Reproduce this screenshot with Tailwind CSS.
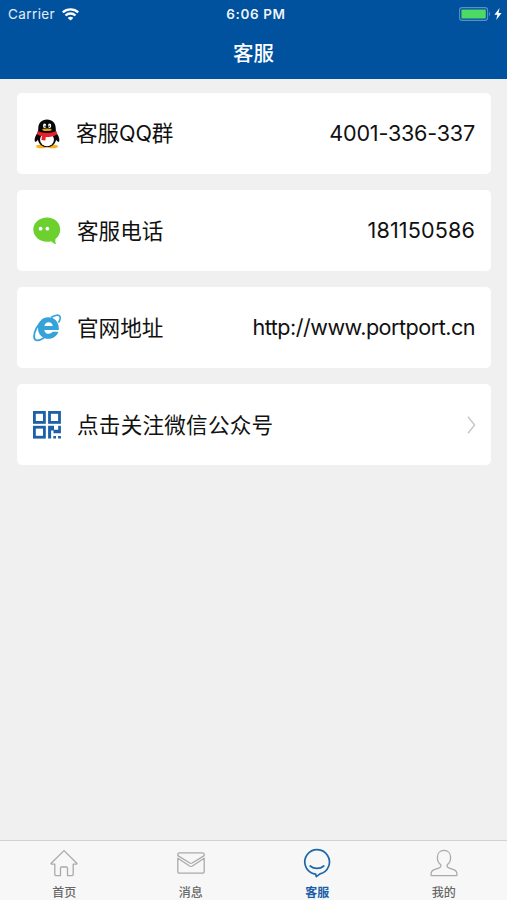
<!DOCTYPE html>
<html lang="zh-CN">
<head>
    <meta charset="UTF-8">
    <meta name="viewport" content="width=device-width, initial-scale=1.0">
    <title>客服</title>
    <script src="https://cdn.jsdelivr.net/npm/@tailwindcss/browser@4"></script>
</head>
<body class="bg-[#f0f0f0] h-screen flex flex-col overflow-hidden font-[Inter,'Noto_Sans_CJK_SC',sans-serif]">
    <!-- Header -->
    <header class="h-[79px] shrink-0 bg-[#00529f] text-white">
        <!-- Status bar -->
        <div class="h-7 grid grid-cols-3 items-center pl-2 pr-[5px] text-[13.5px]">
            <div class="flex items-center gap-[7px] text-white/90">
                <span class="tracking-[0.4px]">Carrier</span>
                <svg class="w-[17px] h-[13px]" viewBox="0 0 17 13" fill="none" stroke="#fff" stroke-width="2.3">
                    <path d="M.8 4.4C5.200.4 11.800.4 16.200 4.400" />
                    <path d="M3.500 7.500c2.800-2.700 7.200-2.700 10 0" />
                    <path d="M8.500 12.600 5.700 9.900c1.500-1.400 4.100-1.400 5.600 0z" fill="#fff" stroke="none" />
                </svg>
            </div>
            <div class="text-center font-semibold text-[13.5px] leading-5 tracking-[0.6px] text-white/95 pl-0.5 pb-px">6:06 PM</div>
            <div class="flex items-center justify-end gap-[3px]">
                <svg class="w-[32px] h-[14px]" viewBox="0 0 32 14">
                    <rect x=".6" y=".6" width="28" height="12.8" rx="2.6" fill="none" stroke="#5b90c4" stroke-width="1.1" />
                    <rect x="2.4" y="2.4" width="24.4" height="9.2" rx="1" fill="#4cd964" />
                    <path d="M30 4.8c1.4.6 1.4 3.8 0 4.4z" fill="#5b90c4" />
                </svg>
                <svg class="w-[8px] h-[12px]" viewBox="0 0 8 12" fill="#fff">
                    <path d="M5.6 0 .4 6.8h3L2.2 12 7.6 5H4.5z" />
                </svg>
            </div>
        </div>
        <h1 class="h-12 text-center text-[20.5px] leading-[51px] font-medium">客服</h1>
    </header>

    <!-- Contact list -->
    <main class="flex-1 pl-[17px] pr-4 pt-3.5 flex flex-col gap-[16.1px] text-[21.6px] text-[#111]">
        <div class="h-[81px] bg-white rounded-[5px] flex items-center pl-4 pr-4">
            <svg class="w-7 h-[30px] mr-[15px]" viewBox="0 0 28 30">
                <ellipse cx="8.5" cy="27.4" rx="5.4" ry="1.8" fill="#f9b21c" />
                <ellipse cx="19.5" cy="27.4" rx="5.4" ry="1.8" fill="#f9b21c" />
                <path d="M14 .6C8.500.6 5.300 4.400 5.300 9L5 13C2.900 16 1.300 19 1.700 22c.3 1.600 1.700.8 3.200-1.300C6 25.400 9.500 28.200 14 28.200s8-2.800 9.100-7.500c1.500 2.100 2.900 2.900 3.200 1.300.4-3-1.200-6-3.300-9l-.3-4C22.700 4.400 19.500.6 14 .6z" fill="#080808" />
                <ellipse cx="14" cy="20.6" rx="7" ry="6.6" fill="#fff" />
                <ellipse cx="11.6" cy="6.8" rx="1.6" ry="2.2" fill="#fff" />
                <ellipse cx="16.6" cy="6.8" rx="1.6" ry="2.2" fill="#fff" />
                <circle cx="12.1" cy="7.2" r=".8" fill="#111" />
                <circle cx="16.1" cy="7.2" r=".8" fill="#111" />
                <ellipse cx="14" cy="10.8" rx="4.8" ry="1.2" fill="#e3a51b" />
                <path d="M4.600 12c5 2.600 13.800 2.600 18.800 0l.6 3.400c-3.400 2-7.600 2.600-11.200 2.500l-.4 3.700-4-.5.600-4c-1.700-.4-3.500-1-5-1.900z" fill="#e9202a" />
            </svg>
            <span class="-tracking-[0.1px]">客服QQ群</span>
            <span class="ml-auto -tracking-[0.22px]">4001-336-337</span>
        </div>

        <div class="h-[81px] bg-white rounded-[5px] flex items-center pl-4 pr-4">
            <svg class="w-7 h-7 mr-4" viewBox="0 0 28 28">
                <path d="M14 .6C6.500.6.3 5.800.3 12.600S6.500 24.800 14 24.800c1.500 0 2.900-.2 4.200-.6 1.300 1.300 2.800 2.500 4.900 3.100-.8-1.400-.9-3.400-.7-5.200 3-2.200 4.800-5.500 4.800-9.300C27.200 5.800 21.500.6 14 .6z" fill="#6cd02f" />
                <circle cx="7.6" cy="11.7" r="1.9" fill="#fff" />
                <circle cx="14.4" cy="11.7" r="1.9" fill="#fff" />
            </svg>
            <span class="pt-px">客服电话</span>
            <span class="ml-auto tracking-[0.12px]">181150586</span>
        </div>

        <div class="h-[81px] bg-white rounded-[5px] flex items-center pl-4 pr-4">
            <svg class="w-7 h-7 mr-4" viewBox="0 0 28 28">
                <path d="M15.200 3.200c6.300 0 10.600 4.600 10.600 11.200v1.500H11.300c.2 2.400 1.900 3.900 4.400 3.900 1.700 0 3.100-.7 3.900-2h5.800c-1.400 4.300-5.100 7-9.900 7C9.300 24.800 5 20.300 5 14.200S9.200 3.200 15.200 3.200zM11.400 12h8.400c-.3-2.300-1.900-3.700-4.200-3.700s-3.800 1.400-4.200 3.700z" fill="#35a2da" />
                <g fill="none" stroke="#35a2da">
                    <path d="M18 3.500C22.200.9 25.800.4 26.900 2.300c.8 1.400.2 3.700-1.400 6.400" stroke-width="1.6" />
                    <path d="M10 6.600C4.500 10.500 1 17.500 1.100 22.500c.1 4.800 4.100 5 10 1.200" stroke-width="1.900" />
                </g>
            </svg>
            <span class="pt-px">官网地址</span>
            <span class="ml-auto -tracking-[0.51px]">http://www.portport.cn</span>
        </div>

        <div class="h-[81px] bg-white rounded-[5px] flex items-center pl-4 pr-[15px]">
            <svg class="w-7 h-7 mr-4" viewBox="0 0 28 28" fill="none" stroke="#1c60a8" stroke-width="2.8">
                <rect x="1.4" y="1.4" width="10" height="10" />
                <rect x="16.5" y="1.4" width="10" height="10" />
                <rect x="1.4" y="16.2" width="10" height="10" />
                <path d="M15.100 14.800h5.900v3.900h4.200v-3.900h2.700v7.400h-7.400v-2.700h-2.400v8.100h-3zM20.300 24.900h2.700v2.700h-2.700zM25.100 24.900h2.800v2.700h-2.800z" fill="#1c60a8" stroke="none" />
            </svg>
            <span class="pt-px tracking-[0.22px]">点击关注微信公众号</span>
            <svg class="ml-auto w-[9px] h-[18px]" viewBox="0 0 9 18" fill="none" stroke="#c8c8cc" stroke-width="1.5">
                <path d="M1 .7 7.600 9 1 17.300" />
            </svg>
        </div>
    </main>

    <!-- Tab bar -->
    <nav class="h-[60px] shrink-0 bg-[#f7f7f7] border-t border-[#d2d2d2] grid grid-cols-4 pl-px text-[12px] font-medium text-[#686868]">
        <a class="flex flex-col items-center pt-2">
            <svg class="w-7 h-7" viewBox="0 0 28 28" fill="none" stroke="#aaa" stroke-width="1.3" stroke-linejoin="round">
                <path d="M14 1.600 1.200 14.200c-.4.500-.2.900.4.900h3.200v10.500q0 1 1 1h4.700V19q0-1 1-1h5q1 0 1 1v7.600h4.700q1 0 1-1V15.100h3.200c.6 0 .8-.4.4-.9z" />
            </svg>
            <span class="leading-[15px] mt-2">首页</span>
        </a>
        <a class="flex flex-col items-center pt-2">
            <svg class="w-7 h-7" viewBox="0 0 28 28" fill="none" stroke="#aaa" stroke-width="1.3" stroke-linejoin="round">
                <path d="M2.600 3.800h22.800q1.800 0 1.800 1.800v1L15.200 14q-1.200.7-2.400 0L.8 6.600v-1Q.8 3.800 2.600 3.800z" />
                <path d="M.8 9.300 12.600 17q1.400.8 2.800 0L27.200 9.300v13q0 1.900-1.900 1.900H2.700q-1.900 0-1.900-1.900z" />
            </svg>
            <span class="leading-[15px] mt-2">消息</span>
        </a>
        <a class="flex flex-col items-center pt-2 text-[#1b5fa8] font-bold">
            <svg class="w-7 h-7 overflow-visible" viewBox="0 0 28 28" fill="none" stroke="#1d68ac" stroke-width="1.7" stroke-linejoin="round">
                <path d="M10.500 24.700A12.300 12.300 0 1 1 17 24.900L13.300 27.600l-.6-2.400z" />
                <path d="M7.200 17c3.800 3.200 9.800 3.200 13.600 0" stroke-linecap="round" />
            </svg>
            <span class="leading-[15px] mt-2">客服</span>
        </a>
        <a class="flex flex-col items-center pt-2">
            <svg class="w-7 h-7" viewBox="0 0 28 28" fill="none" stroke="#aaa" stroke-width="1.3" stroke-linejoin="round">
                <path d="M14 1.400c-4 0-6.600 3-6.600 7 0 3 1.200 5.700 3.300 7.200.6 1.700-.3 2.900-2 3.500l-5 1.700C1.500 21.700 1 23.500 1 26q0 .7.800.7h24.400q.8 0 .8-.7c0-2.500-.5-4.300-2.700-5.200l-5-1.700c-1.700-.6-2.600-1.800-2-3.500 2.100-1.500 3.300-4.200 3.300-7.200 0-4-2.600-7-6.600-7z" />
            </svg>
            <span class="leading-[15px] mt-2">我的</span>
        </a>
    </nav>
</body>
</html>
